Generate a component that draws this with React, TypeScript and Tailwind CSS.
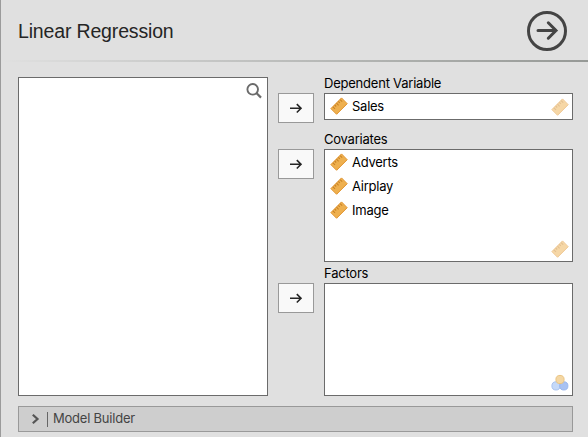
import React from "react";

function Ruler({ faded = false }: { faded?: boolean }) {
  return (
    <svg width="18" height="18" viewBox="0 0 18 18" className={faded ? "block shrink-0 opacity-50" : "mb-[2px] block shrink-0"}>
      <path d="M11.5 0.9 L17.2 6.7 L6.6 17.3 L0.9 11.6 Z" fill="#eeb04f" stroke="#e0922c" strokeWidth="1" strokeLinejoin="round" />
      <path d="M2.9 9.8 L5 11.9 M4.7 8 L6.2 9.5 M6.5 6.2 L8.6 8.3 M8.3 4.4 L9.8 5.9 M10.1 2.6 L12.2 4.7" stroke="#c98326" strokeWidth="1.1" fill="none" />
    </svg>
  );
}

function Nominal() {
  return (
    <svg width="18" height="18" viewBox="0 0 18 18" className="block">
      <circle cx="5" cy="11.9" r="4.1" fill="#c5d9f8" stroke="#a9c3f0" />
      <circle cx="12.8" cy="11.9" r="4.1" fill="#a9c2f2" stroke="#9ab7ef" />
      <circle cx="9" cy="5.5" r="4.1" fill="#f4d7a4" stroke="#ebc481" />
    </svg>
  );
}

function MoveButton() {
  return (
    <button className="flex h-[30px] w-9 shrink-0 items-center justify-center border border-[#999] bg-[#f9f9f9]">
      <svg width="14" height="12" viewBox="0 0 14 12" fill="none" stroke="#252525" strokeWidth="1.6">
        <path d="M1 6.3 H12 M7.8 2.1 L12 6.3 L7.8 10.5" />
      </svg>
    </button>
  );
}

type FieldProps = { label: string; items: string[]; box: string; kind?: "scale" | "nominal" };

function Field({ label, items, box, kind = "scale" }: FieldProps) {
  return (
    <div className="flex items-start gap-[10px]">
      <div className="-mb-[3px] pt-[18px]">
        <MoveButton />
      </div>
      <div className="w-[249px]">
        <div className="h-[18px] text-[13px] leading-[17px] tracking-[-0.22px] text-black">{label}</div>
        <div className={`relative border border-[#6b6b6b] bg-white pl-[5px] ${box}`}>
          {items.map((item) => (
            <div key={item} className="flex h-6 items-center gap-[4px] text-[13px] tracking-[-0.25px] text-black">
              <Ruler />
              <span>{item}</span>
            </div>
          ))}
          <div className="absolute right-[3px] bottom-[3px]">{kind === "scale" ? <Ruler faded /> : <Nominal />}</div>
        </div>
      </div>
    </div>
  );
}

export default function App() {
  return (
    <div className="h-[437px] w-[588px] overflow-hidden border-l border-[#9b9b9b] bg-[#e0e0e0] font-['Inter',sans-serif]">
      <header className="flex h-[60px] items-center justify-between pr-[21px] pl-[17px]">
        <h1 className="pt-[4px] font-['Liberation_Sans',Arial,sans-serif] text-[19.5px] tracking-[-0.16px] text-[#252525]">Linear Regression</h1>
        <svg width="40" height="40" viewBox="0 0 40 40" fill="none" stroke="#444" strokeWidth="3" className="mt-[2px]">
          <circle cx="20" cy="20" r="18.5" />
          <path d="M11 19.5 H29 M21.3 11.8 L29 19.5 L21.3 27.2" strokeLinecap="round" />
        </svg>
      </header>
      <div className="h-[2px] bg-linear-to-r from-[#e0e0e0] to-[#969996]" />
      <main className="flex gap-[10px] pt-[13px] pl-[17px]">
        <div className="mt-[2px] flex h-[319px] w-[250px] justify-end border border-[#6b6b6b] bg-white pt-[5px] pr-[5px]">
          <svg width="16" height="16" viewBox="0 0 16 16" fill="none" stroke="#6b6b6b">
            <circle cx="6.7" cy="6.3" r="5.3" strokeWidth="1.9" />
            <path d="M10.4 10 L15 14.6" strokeWidth="2.2" />
          </svg>
        </div>
        <div className="flex flex-col">
          <Field label="Dependent Variable" items={["Sales"]} box="h-[27px] pt-[1px]" />
          <div className="mt-[11px]">
            <Field label="Covariates" items={["Adverts", "Airplay", "Image"]} box="h-[113px] pt-[1px]" />
          </div>
          <div className="mt-[3px]">
            <Field label="Factors" items={[]} box="h-[113px]" kind="nominal" />
          </div>
        </div>
      </main>
      <div className="mt-[10px] ml-[17px] flex h-[26px] w-[555px] items-center border border-[#999] bg-[#cecece] pl-[12px] text-[13px] tracking-[-0.22px] text-[#444]">
        <svg width="9" height="10" viewBox="0 0 9 10" fill="none" stroke="#555" strokeWidth="2.2">
          <path d="M1.8 0.8 L6.5 5 L1.8 9.2" />
        </svg>
        <span className="ml-[7px] h-[15px] w-px bg-[#666]" />
        <span className="ml-[5px]">Model Builder</span>
      </div>
    </div>
  );
}
